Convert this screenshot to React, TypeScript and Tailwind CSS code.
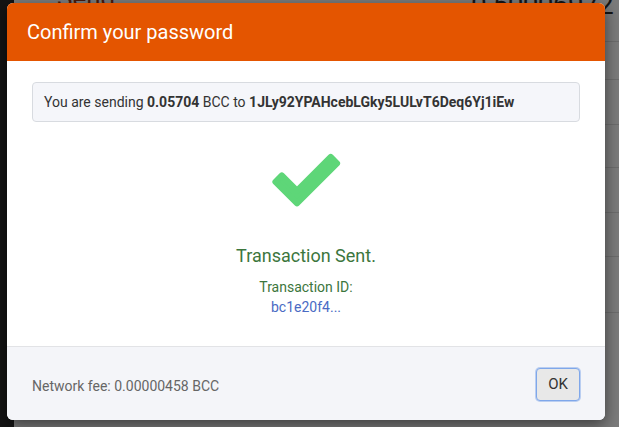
import React from "react";

export default function App() {
  const lines = [41, 79, 124, 167, 212, 256, 312];
  return (
    <div
      className="relative w-[619px] h-[427px] overflow-hidden bg-[#7b7b7b]"
      style={{ fontFamily: "Roboto, 'Noto Sans', sans-serif" }}
    >
      {/* underlying page */}
      <div className="absolute inset-0 flex">
        <div className="w-[14px] h-full bg-[#141414]" />
        <div className="flex-1 relative">
          <div className="absolute left-[43px] top-[-21px] text-[26px] text-[#4a1a0a]">Send</div>
          <div className="absolute right-[6px] top-[-16px] text-[28px] text-[#151515] tracking-tight">0.50006972</div>
          {lines.map((y) => (
            <div key={y} className="absolute left-0 right-0 h-px bg-[#6c6c6c]" style={{ top: y }} />
          ))}
        </div>
      </div>

      {/* modal */}
      <div className="absolute left-[7px] top-[3px] w-[598px] h-[417px] rounded-[6px] overflow-hidden bg-white flex flex-col shadow-[0_5px_15px_rgba(0,0,0,0.5)]">
        <div className="h-[58px] bg-[#e45500] px-[20px] flex items-center shrink-0">
          <span className="text-[20px] text-white leading-none">Confirm your password</span>
        </div>
        <div className="flex-1 flex flex-col items-center px-[25px] pt-[21px]">
          <div className="w-full h-[40px] border border-[#d8dbe0] rounded-[4px] bg-[#f5f6fa] px-[11px] flex items-center text-[14px] text-[#333]">
            <span>
              You are sending <b className="font-bold">0.05704</b> BCC to{" "}
              <b className="font-bold">1JLy92YPAHcebLGky5LULvT6Deq6Yj1iEw</b>
            </span>
          </div>
          <svg width="80" height="60" viewBox="0 0 80 60" className="mt-[30px]">
            <polygon
              points="15.8,23.4 9.4,29.8 31,51.4 71.1,11.3 64.7,4.9 31,38.6"
              fill="#5ed678"
              stroke="#5ed678"
              strokeWidth="6"
              strokeLinejoin="round"
            />
          </svg>
          <div className="mt-[32px] text-[18px] leading-[24px] text-[#3c763d]">Transaction Sent.</div>
          <div className="mt-[9px] text-[14px] leading-[20px] text-[#3c763d]">Transaction ID:</div>
          <div className="text-[14px] leading-[20px] text-[#4a6bc4]">bc1e20f4...</div>
        </div>
        <div className="h-[74px] shrink-0 border-t border-[#e2e3e6] bg-[#f4f5f9] px-[25px] flex items-center justify-between">
          <span className="text-[14px] text-[#666] mt-[5px]">Network fee: 0.00000458 BCC</span>
          <button className="w-[44px] h-[33px] rounded-[4px] bg-[#e8e8e8] border border-[#7fa7ea] shadow-[0_0_0_1px_rgba(127,167,234,0.5)] text-[15px] text-[#333] flex items-center justify-center mt-[1px]">
            OK
          </button>
        </div>
      </div>
    </div>
  );
}
